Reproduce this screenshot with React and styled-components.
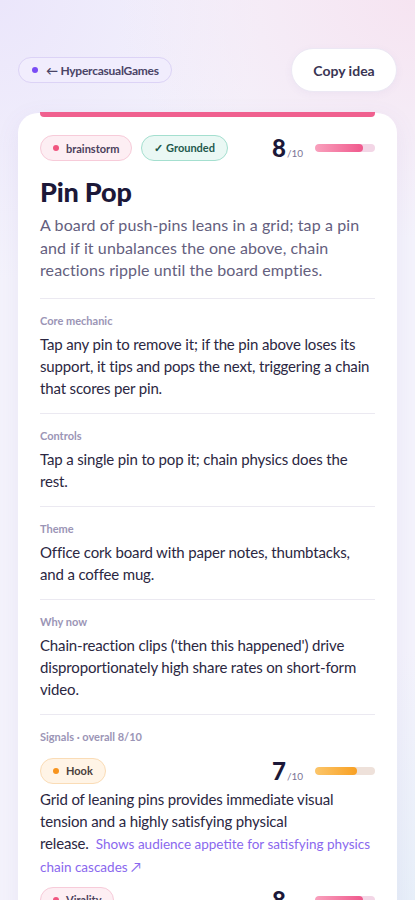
import React from "react";
import styled, { createGlobalStyle } from "styled-components";

const GlobalStyle = createGlobalStyle`
  html, body { margin: 0; padding: 0; }
  body {
    min-height: 900px;
    font-family: "Lato", "Noto Sans", sans-serif;
    color: #2b2742;
    background:
      radial-gradient(120% 40% at 100% 0%, #f6e4f1 0%, rgba(246,228,241,0) 60%),
      radial-gradient(90% 40% at 0% 0%, #ebe6fb 0%, rgba(235,230,251,0) 70%),
      radial-gradient(80% 50% at 100% 100%, #e3eef8 0%, rgba(227,238,248,0) 70%),
      #f4f3fc;
    -webkit-font-smoothing: antialiased;
  }
`;

const Page = styled.div`
  padding: 48px 18px 0;
`;

const TopBar = styled.div`
  display: flex;
  align-items: center;
  justify-content: space-between;
`;

const BackChip = styled.a`
  display: inline-flex;
  align-items: center;
  gap: 8px;
  height: 26px;
  box-sizing: border-box;
  padding: 0 12px 0 13px;
  border-radius: 13px;
  background: #f1edfd;
  border: 1px solid #dcd3f6;
  color: #4a4466;
  font-size: 12px;
  font-weight: 700;
  letter-spacing: -0.25px;
  text-decoration: none;
`;

const Dot = styled.span`
  width: 6px;
  height: 6px;
  border-radius: 50%;
  background: ${(p) => p.$color};
  flex: none;
`;

const CopyButton = styled.button`
  height: 44px;
  width: 106px;
  border-radius: 22px;
  border: 1px solid #ece8f4;
  background: #ffffff;
  color: #3a3553;
  font-family: inherit;
  font-size: 14px;
  font-weight: 700;
  box-shadow: 0 2px 8px rgba(90, 70, 160, 0.05);
`;

const Card = styled.section`
  position: relative;
  margin-top: 21px;
  background: #ffffff;
  border-radius: 20px;
  padding: 22px 22px 0;
  box-shadow: 0 6px 24px rgba(110, 90, 170, 0.08);

  &::before {
    content: "";
    position: absolute;
    top: -1px;
    left: 22px;
    right: 22px;
    height: 5px;
    border-radius: 0 0 4px 4px;
    background: #f0608f;
  }
`;

const MetaRow = styled.div`
  display: flex;
  align-items: center;
  gap: 9px;
`;

const Tag = styled.span`
  display: inline-flex;
  align-items: center;
  gap: 7px;
  height: 26px;
  box-sizing: border-box;
  padding: 0 12px;
  border-radius: 13px;
  font-size: 11px;
  font-weight: 700;
  background: ${(p) => p.$bg};
  border: 1px solid ${(p) => p.$border};
  color: ${(p) => p.$fg};
`;

const Score = styled.div`
  margin-left: auto;
  display: flex;
  align-items: center;
  gap: 12px;
`;

const ScoreNum = styled.span`
  display: inline-flex;
  align-items: baseline;
  font-size: 24px;
  font-weight: 900;
  color: #1c1838;
  line-height: 1;

  small {
    font-size: 10px;
    font-weight: 400;
    color: #7b7596;
    margin-left: 1px;
  }
`;

const Track = styled.div`
  width: 60px;
  height: 8px;
  border-radius: 4px;
  background: ${(p) => p.$track};
  overflow: hidden;
`;

const Fill = styled.div`
  height: 100%;
  border-radius: 4px;
  background: ${(p) => p.$fill};
`;

const Title = styled.h1`
  margin: 15px 0 0;
  font-size: 27px;
  line-height: 32px;
  font-weight: 900;
  color: #1c1838;
  letter-spacing: -0.2px;
`;

const Desc = styled.p`
  margin: 6px 0 0;
  font-size: 16px;
  line-height: 22.5px;
  letter-spacing: 0.1px;
  color: #64607e;
`;

const Section = styled.div`
  margin-top: ${(p) => (p.$first ? "16px" : "0")};
  border-top: 1px solid #ebe9f1;
  padding: 15px 0 14px;
`;

const Label = styled.div`
  font-size: 11px;
  line-height: 14px;
  font-weight: 700;
  color: #9b95b6;
`;

const Body = styled.p`
  margin: 5px 0 0;
  font-size: 15px;
  line-height: 22px;
  letter-spacing: -0.15px;
  color: #2b2742;
`;

const SignalList = styled.div`
  display: flex;
  flex-direction: column;
  gap: 9px;
  margin-top: 14px;
`;

const SignalHead = styled.div`
  display: flex;
  align-items: center;
`;

const SignalText = styled.p`
  margin: 4px 0 0;
  font-size: 15px;
  line-height: 22px;
  letter-spacing: -0.15px;
  color: #2b2742;
`;

const SourceLink = styled.a`
  margin-left: 7px;
  font-size: 13.5px;
  letter-spacing: 0;
  color: #8a68ee;
  text-decoration: none;
`;

const sections = [
  {
    label: "Core mechanic",
    text: "Tap any pin to remove it; if the pin above loses its support, it tips and pops the next, triggering a chain that scores per pin.",
  },
  { label: "Controls", text: "Tap a single pin to pop it; chain physics does the rest." },
  { label: "Theme", text: "Office cork board with paper notes, thumbtacks, and a coffee mug." },
  {
    label: "Why now",
    text: "Chain-reaction clips ('then this happened') drive disproportionately high share rates on short-form video.",
  },
];

const tones = {
  pink: {
    bg: "#fdeef3",
    border: "#f7cbd9",
    fg: "#4b3f5c",
    dot: "#f0557f",
    fill: "linear-gradient(90deg, #f9a1bd, #f0588c)",
    track: "#f3d6e6",
  },
  orange: {
    bg: "#fff4e6",
    border: "#fadcb6",
    fg: "#4b3f3c",
    dot: "#f7941d",
    fill: "linear-gradient(90deg, #fcc66a, #f8a023)",
    track: "#eee1da",
  },
};

const signals = [
  {
    name: "Hook",
    tone: "orange",
    score: 7,
    text: "Grid of leaning pins provides immediate visual tension and a highly satisfying physical release.",
    source: "Shows audience appetite for satisfying physics chain cascades ↗",
  },
  {
    name: "Virality",
    tone: "pink",
    score: 8,
    text: "Each cascade is a short, loopable moment that players naturally want to clip and share.",
    source: "Chain-reaction formats trend on short-form feeds ↗",
  },
];

function ScoreBar({ value, tone }) {
  const t = tones[tone];
  return (
    <Score>
      <ScoreNum>
        {value}
        <small>/10</small>
      </ScoreNum>
      <Track $track={t.track}>
        <Fill $fill={t.fill} style={{ width: `${value * 10}%` }} />
      </Track>
    </Score>
  );
}

export default function App() {
  return (
    <>
      <GlobalStyle />
      <Page>
        <TopBar>
          <BackChip href="#">
            <Dot $color="#7a4cf5" />
            ← HypercasualGames
          </BackChip>
          <CopyButton>Copy idea</CopyButton>
        </TopBar>

        <Card>
          <MetaRow>
            <Tag $bg={tones.pink.bg} $border={tones.pink.border} $fg={tones.pink.fg}>
              <Dot $color={tones.pink.dot} />
              brainstorm
            </Tag>
            <Tag $bg="#eaf8f4" $border="#a4dfcf" $fg="#1f5a4d">
              ✓ Grounded
            </Tag>
            <ScoreBar value={8} tone="pink" />
          </MetaRow>

          <Title>Pin Pop</Title>
          <Desc>
            A board of push-pins leans in a grid; tap a pin and if it unbalances the one above, chain
            reactions ripple until the board empties.
          </Desc>

          {sections.map((s, i) => (
            <Section key={s.label} $first={i === 0}>
              <Label>{s.label}</Label>
              <Body>{s.text}</Body>
            </Section>
          ))}

          <Section>
            <Label>Signals · overall 8/10</Label>
            <SignalList>
              {signals.map((s) => {
                const t = tones[s.tone];
                return (
                  <div key={s.name}>
                    <SignalHead>
                      <Tag $bg={t.bg} $border={t.border} $fg={t.fg}>
                        <Dot $color={t.dot} />
                        {s.name}
                      </Tag>
                      <ScoreBar value={s.score} tone={s.tone} />
                    </SignalHead>
                    <SignalText>
                      {s.text}
                      <SourceLink href="#">{s.source}</SourceLink>
                    </SignalText>
                  </div>
                );
              })}
            </SignalList>
          </Section>
        </Card>
      </Page>
    </>
  );
}
